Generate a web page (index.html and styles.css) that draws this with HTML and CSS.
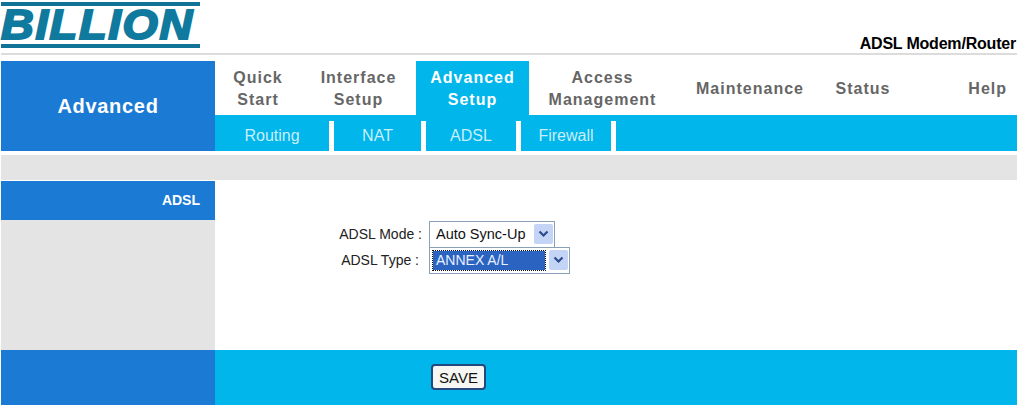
FILE: index.html
```html
<!DOCTYPE html>
<html lang="en">
  <head>
    <meta charset="UTF-8" />
    <title>ADSL Modem/Router</title>
    <link rel="stylesheet" href="styles.css">
  </head>

  <body>
    <header class="top">
      <div class="logo">
        <span class="logo-bar"></span>
        <span class="logo-text">BILLION</span>
        <span class="logo-bar"></span>
      </div>
      <div class="model">ADSL Modem/Router</div>
    </header>

    <nav class="menu">
      <div class="menu-title">Advanced</div>
      <div class="menu-main">
        <ul class="tabs">
          <li class="tab t-quick">Quick<br />Start</li>
          <li class="tab t-interface">Interface<br />Setup</li>
          <li class="tab t-advanced valgt">Advanced<br />Setup</li>
          <li class="tab t-access">Access<br />Management</li>
          <li class="tab t-maint">Maintenance</li>
          <li class="tab t-status">Status</li>
          <li class="tab t-help">Help</li>
        </ul>
        <ul class="subtabs">
          <li class="sub s-routing">Routing</li>
          <li class="sub s-nat">NAT</li>
          <li class="sub s-adsl">ADSL</li>
          <li class="sub s-firewall">Firewall</li>
        </ul>
      </div>
    </nav>

    <div class="strip"></div>

    <section class="content">
      <aside class="side">
        <h2 class="side-title">ADSL</h2>
      </aside>
      <div class="form">
        <div class="row">
          <span class="label">ADSL Mode :</span>
          <div class="select select-mode">
            <span class="value">Auto Sync-Up</span>
            <span class="arrow">
              <svg width="11" height="8" viewBox="0 0 11 8"><path d="M1.5 1.5 L5.5 5.5 L9.5 1.5" fill="none" stroke="#2b4a8c" stroke-width="2.2"/></svg>
            </span>
          </div>
        </div>
        <div class="row">
          <span class="label label-type">ADSL Type :</span>
          <div class="select select-type">
            <span class="value picked">ANNEX A/L</span>
            <span class="arrow">
              <svg width="11" height="8" viewBox="0 0 11 8"><path d="M1.5 1.5 L5.5 5.5 L9.5 1.5" fill="none" stroke="#2b4a8c" stroke-width="2.2"/></svg>
            </span>
          </div>
        </div>
      </div>
    </section>

    <footer class="bottom">
      <div class="bottom-side"></div>
      <div class="bottom-main">
        <button class="save">SAVE</button>
      </div>
    </footer>
  </body>
</html>
```

FILE: styles.css
```css
* {
  box-sizing: border-box;
}

body {
  margin: 0;
  padding: 0 2px 0 1px;
  height: 408px;
  overflow: hidden;
  font-family: "Liberation Sans", Arial, sans-serif;
  background-color: #fff;
}

ul {
  list-style: none;
  margin: 0;
  padding: 0;
}

/* top */
.top {
  display: flex;
  justify-content: space-between;
  align-items: flex-end;
  height: 55px;
  border-bottom: 2px solid #dcdcdc;
}

.logo {
  display: flex;
  flex-direction: column;
  width: 199px;
  height: 46px;
  margin-top: 2px;
  align-self: flex-start;
}

.logo-bar {
  display: block;
  height: 4px;
  background-color: #0f7296;
}

.logo-text {
  flex: 1;
  font-size: 42px;
  line-height: 38px;
  font-weight: bold;
  font-style: italic;
  color: #0f7a9e;
  letter-spacing: 1.5px;
  white-space: nowrap;
  transform: scaleX(1.08);
  transform-origin: left center;
  -webkit-text-stroke: 2px #0f7a9e;
}

.model {
  font-size: 16px;
  font-weight: bold;
  letter-spacing: -0.2px;
  color: #000;
  padding-right: 1px;
}

/* menu */
.menu {
  display: flex;
  margin-top: 6px;
  height: 90px;
}

.menu-title {
  width: 214px;
  display: flex;
  align-items: center;
  justify-content: center;
  background-color: #1a7ad4;
  color: #fff;
  font-size: 20px;
  font-weight: bold;
  letter-spacing: 0.7px;
}

.menu-main {
  flex: 1;
  display: flex;
  flex-direction: column;
}

.tabs {
  display: flex;
  height: 54px;
}

.tab {
  display: flex;
  align-items: center;
  justify-content: center;
  padding-top: 2px;
  text-align: center;
  font-size: 16px;
  line-height: 22px;
  font-weight: bold;
  letter-spacing: 1px;
  color: #666;
}

.t-quick { width: 86px; }
.t-interface { width: 115px; }
.t-advanced { width: 113px; }
.t-access { width: 147px; }
.t-maint { width: 148px; }
.t-status { width: 78px; }
.t-help { flex: 1; justify-content: flex-end; padding-right: 10px; }

.valgt {
  background-color: #00b6ea;
  color: #fff;
}

.subtabs {
  display: flex;
  height: 36px;
  background-color: #00b6ea;
  padding-top: 6px;
}

.sub {
  display: flex;
  align-items: center;
  justify-content: center;
  font-size: 16px;
  color: #c8eefa;
  border-right: 5px solid #fff;
}

.s-routing { width: 119px; }
.s-nat { width: 92px; }
.s-adsl { width: 95px; }
.s-firewall { width: 95px; }

.strip {
  height: 25px;
  margin-top: 4px;
  background-color: #e4e4e4;
}

/* content */
.content {
  display: flex;
  height: 169px;
  margin-top: 1px;
}

.side {
  width: 214px;
  background-color: #e4e4e4;
}

.side-title {
  margin: 0;
  height: 39px;
  padding-right: 15px;
  text-align: right;
  line-height: 38px;
  font-size: 14px;
  font-weight: bold;
  color: #fff;
  background-color: #1a7ad4;
}

.form {
  flex: 1;
  padding-top: 40px;
}

.row {
  display: flex;
  align-items: center;
  height: 26px;
}

.label {
  width: 214px;
  padding-right: 7px;
  text-align: right;
  font-size: 14px;
  color: #222;
}

.label-type {
  padding-right: 10px;
}

.select {
  display: flex;
  align-items: center;
  justify-content: space-between;
  height: 27px;
  padding: 3px 1px 3px 3px;
  border: 1px solid #8aa0b8;
  background-color: #fff;
  font-size: 14.5px;
  color: #111;
}

.select-mode { width: 126px; }
.select-type { width: 141px; }

.value {
  flex: 1;
  padding-left: 3px;
  line-height: 19px;
}

.picked {
  margin-right: 4px;
  background-color: #2a64c0;
  color: #e8efff;
  font-size: 14px;
  outline: 1px dotted #111;
}

.arrow {
  display: flex;
  align-items: center;
  justify-content: center;
  width: 19px;
  height: 20px;
  border-radius: 2px;
  background-color: #c4d4f6;
}

/* bottom */
.bottom {
  display: flex;
  height: 55px;
}

.bottom-side {
  width: 214px;
  background-color: #1a7ad4;
}

.bottom-main {
  flex: 1;
  background-color: #00b6ea;
  padding: 14px 0 0 216px;
}

.save {
  width: 55px;
  height: 26px;
  padding: 0;
  border: 2px solid #25487e;
  border-radius: 4px;
  background-color: #f6f6f2;
  font-family: "Liberation Sans", Arial, sans-serif;
  font-size: 15px;
  color: #111;
}
```
